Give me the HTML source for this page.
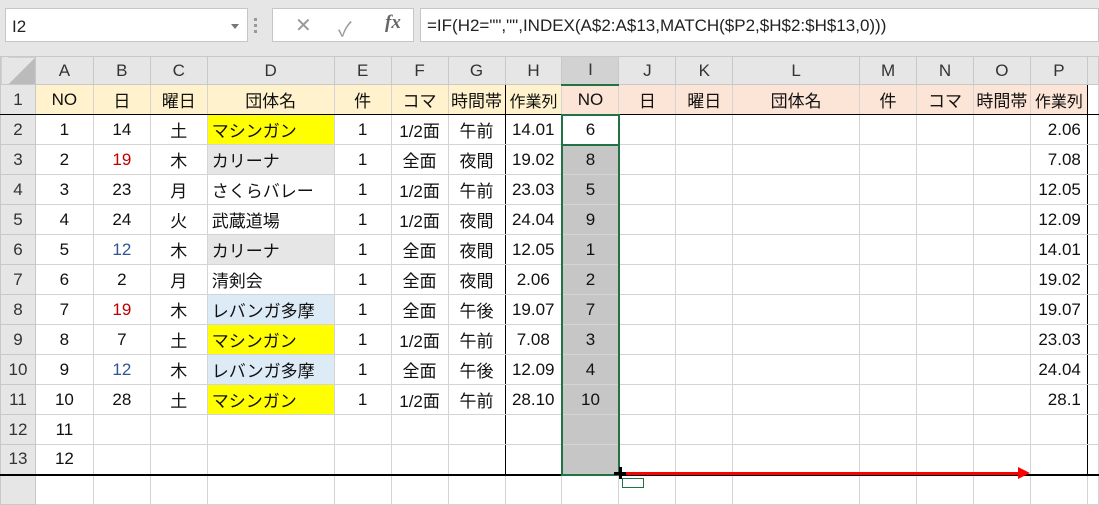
<!DOCTYPE html>
<html><head><meta charset="utf-8"><style>
*{margin:0;padding:0;box-sizing:border-box}
body{width:1099px;height:483px;overflow:hidden;background:#fff;font-family:"Liberation Sans","Noto Sans CJK JP",sans-serif;position:relative}
.top{position:absolute;left:0;top:0;width:1099px;height:56px;background:#e6e6e6}
.nb{position:absolute;left:5px;top:8px;width:243px;height:34px;background:#fff;border:1px solid #c6c6c6;font-size:17px;padding:8px 6px;color:#222}
.nb:after{content:"";position:absolute;right:8px;top:15px;border:4px solid transparent;border-top:5px solid #777}
.dots{position:absolute;left:254px;top:18px;width:3px;height:16px;background:repeating-linear-gradient(#999 0 3px,transparent 3px 6px)}
.fx{position:absolute;left:272px;top:8px;width:142px;height:34px;background:#fff;border:1px solid #c6c6c6;font-size:20px;color:#999}
.fb{position:absolute;left:420px;top:8px;width:679px;height:34px;background:#fff;border:1px solid #c6c6c6;font-size:17px;padding:7px 6px;color:#222;white-space:nowrap}
table{position:absolute;left:0;top:56px;border-collapse:collapse;table-layout:fixed}
td{border:1px solid #d4d4d4;height:30px;font-size:17px;text-align:center;white-space:nowrap;overflow:hidden;color:#111;padding:0}
tr.h td{height:28px;background:#e6e6e6;color:#333;border-color:#c8c8c8}
td.rh{background:#e6e6e6;color:#333;border-color:#c8c8c8}
tr.r1 td.a{background:#fff2cc}
tr.r1 td.b{background:#fce4d6}
tr.r1 td{border-bottom:1px solid #000}
td.l{text-align:left;padding-left:4px}
td.r{text-align:right;padding-right:6px}
.y{background:#ffff00}.g{background:#e7e6e6}.bl{background:#ddebf7}
.gr{background:#c6c6c6}
.red{color:#c00000}.blu{color:#2f5597}
td.bh{border-right:1px solid #000}
td.bp{border-right:1px solid #000}
</style></head><body>
<div class="top">
<div class="nb">I2</div>
<div class="dots"></div>
<div class="fx"><span style="position:absolute;left:22px;top:4px">✕</span><span style="position:absolute;left:65px;top:4px">✓</span><span style="position:absolute;left:112px;top:3px;font-family:'Liberation Serif',serif;font-style:italic;font-weight:bold;color:#666;font-size:19px">fx</span></div>
<div class="fb">=IF(H2="","",INDEX(A$2:A$13,MATCH($P2,$H$2:$H$13,0)))</div>
</div>
<table>
<colgroup><col style="width:35px"><col style="width:58px"><col style="width:57px"><col style="width:57px"><col style="width:127px"><col style="width:57px"><col style="width:57px"><col style="width:57px"><col style="width:57px"><col style="width:57px"><col style="width:57px"><col style="width:57px"><col style="width:127px"><col style="width:57px"><col style="width:57px"><col style="width:57px"><col style="width:57px"><col style="width:11px"></colgroup>
<tr class="h"><td style="background:linear-gradient(135deg,#e6e6e6 55%,#bbb 55%)"></td><td>A</td><td>B</td><td>C</td><td>D</td><td>E</td><td>F</td><td>G</td><td>H</td><td style="background:#d2d2d2;border-bottom:2px solid #217346">I</td><td>J</td><td>K</td><td>L</td><td>M</td><td>N</td><td>O</td><td>P</td><td></td></tr>
<tr class="r1"><td class="rh">1</td><td class="a">NO</td><td class="a">日</td><td class="a">曜日</td><td class="a">団体名</td><td class="a">件</td><td class="a">コマ</td><td class="a" style="border-right:1px solid #000">時間帯</td><td class="a" style="font-size:16px">作業列</td><td class="b">NO</td><td class="b">日</td><td class="b">曜日</td><td class="b">団体名</td><td class="b">件</td><td class="b">コマ</td><td class="b">時間帯</td><td class="b" style="font-size:16px;border-right:1px solid #000">作業列</td><td></td></tr>
<tr><td class="rh">2</td><td>1</td><td>14</td><td>土</td><td class="l y">マシンガン</td><td>1</td><td>1/2面</td><td class="bh">午前</td><td>14.01</td><td style="border:2px solid #217346">6</td><td></td><td></td><td></td><td></td><td></td><td></td><td class="r bp">2.06</td><td></td></tr>
<tr><td class="rh">3</td><td>2</td><td class="red">19</td><td>木</td><td class="l g">カリーナ</td><td>1</td><td>全面</td><td class="bh">夜間</td><td>19.02</td><td class="gr" style="border-left:2px solid #217346;border-right:2px solid #217346">8</td><td></td><td></td><td></td><td></td><td></td><td></td><td class="r bp">7.08</td><td></td></tr>
<tr><td class="rh">4</td><td>3</td><td>23</td><td>月</td><td class="l">さくらバレー</td><td>1</td><td>1/2面</td><td class="bh">午前</td><td>23.03</td><td class="gr" style="border-left:2px solid #217346;border-right:2px solid #217346">5</td><td></td><td></td><td></td><td></td><td></td><td></td><td class="r bp">12.05</td><td></td></tr>
<tr><td class="rh">5</td><td>4</td><td>24</td><td>火</td><td class="l">武蔵道場</td><td>1</td><td>1/2面</td><td class="bh">夜間</td><td>24.04</td><td class="gr" style="border-left:2px solid #217346;border-right:2px solid #217346">9</td><td></td><td></td><td></td><td></td><td></td><td></td><td class="r bp">12.09</td><td></td></tr>
<tr><td class="rh">6</td><td>5</td><td class="blu">12</td><td>木</td><td class="l g">カリーナ</td><td>1</td><td>全面</td><td class="bh">夜間</td><td>12.05</td><td class="gr" style="border-left:2px solid #217346;border-right:2px solid #217346">1</td><td></td><td></td><td></td><td></td><td></td><td></td><td class="r bp">14.01</td><td></td></tr>
<tr><td class="rh">7</td><td>6</td><td>2</td><td>月</td><td class="l">清剣会</td><td>1</td><td>全面</td><td class="bh">夜間</td><td>2.06</td><td class="gr" style="border-left:2px solid #217346;border-right:2px solid #217346">2</td><td></td><td></td><td></td><td></td><td></td><td></td><td class="r bp">19.02</td><td></td></tr>
<tr><td class="rh">8</td><td>7</td><td class="red">19</td><td>木</td><td class="l bl">レバンガ多摩</td><td>1</td><td>全面</td><td class="bh">午後</td><td>19.07</td><td class="gr" style="border-left:2px solid #217346;border-right:2px solid #217346">7</td><td></td><td></td><td></td><td></td><td></td><td></td><td class="r bp">19.07</td><td></td></tr>
<tr><td class="rh">9</td><td>8</td><td>7</td><td>土</td><td class="l y">マシンガン</td><td>1</td><td>1/2面</td><td class="bh">午前</td><td>7.08</td><td class="gr" style="border-left:2px solid #217346;border-right:2px solid #217346">3</td><td></td><td></td><td></td><td></td><td></td><td></td><td class="r bp">23.03</td><td></td></tr>
<tr><td class="rh">10</td><td>9</td><td class="blu">12</td><td>木</td><td class="l bl">レバンガ多摩</td><td>1</td><td>全面</td><td class="bh">午後</td><td>12.09</td><td class="gr" style="border-left:2px solid #217346;border-right:2px solid #217346">4</td><td></td><td></td><td></td><td></td><td></td><td></td><td class="r bp">24.04</td><td></td></tr>
<tr><td class="rh">11</td><td>10</td><td>28</td><td>土</td><td class="l y">マシンガン</td><td>1</td><td>1/2面</td><td class="bh">午前</td><td>28.10</td><td class="gr" style="border-left:2px solid #217346;border-right:2px solid #217346">10</td><td></td><td></td><td></td><td></td><td></td><td></td><td class="r bp">28.1</td><td></td></tr>
<tr><td class="rh">12</td><td>11</td><td></td><td></td><td></td><td></td><td></td><td class="bh"></td><td></td><td class="gr" style="border-left:2px solid #217346;border-right:2px solid #217346"></td><td></td><td></td><td></td><td></td><td></td><td></td><td class="bp"></td><td></td></tr>
<tr style="border-bottom:2px solid #000"><td class="rh">13</td><td>12</td><td></td><td></td><td></td><td></td><td></td><td class="bh"></td><td></td><td class="gr" style="border-left:2px solid #217346;border-right:2px solid #217346;border-bottom:2px solid #217346"></td><td></td><td></td><td></td><td></td><td></td><td></td><td class="bp"></td><td></td></tr>
<tr><td class="rh" style="height:10px"></td><td></td><td></td><td></td><td></td><td></td><td></td><td></td><td></td><td></td><td></td><td></td><td></td><td></td><td></td><td></td><td></td><td></td></tr>
</table>
<div style="position:absolute;left:620px;top:472px;width:400px;height:3px;background:#f00"></div>
<div style="position:absolute;left:1018px;top:467px;border-top:6px solid transparent;border-bottom:6px solid transparent;border-left:12px solid #f00"></div>
<div style="position:absolute;left:614px;top:472px;width:12px;height:3px;background:#000"></div>
<div style="position:absolute;left:619px;top:467px;width:3px;height:12px;background:#000"></div>
<div style="position:absolute;left:622px;top:478px;width:22px;height:10px;border:1px solid #217346;background:#fff"></div>
</body></html>
